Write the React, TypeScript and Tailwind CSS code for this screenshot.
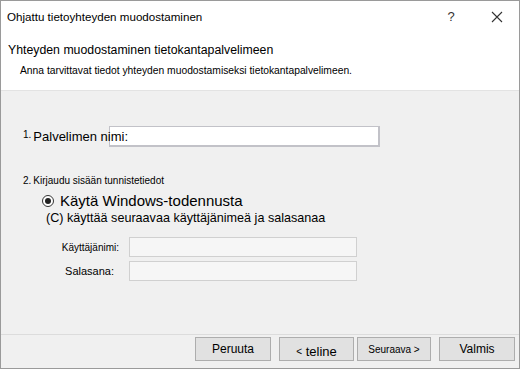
export default function App() {
  return (
    <div className="w-[520px] h-[369px] border border-[#9a9a9a] bg-[#f0f0f0] flex flex-col font-['Liberation_Sans',Arial,sans-serif] text-black overflow-hidden">
      {/* title bar + header */}
      <div className="bg-white h-[90px] border-b border-[#e3e3e3] flex flex-col">
        <div className="h-[32px] flex items-center pl-[6px] pr-[12px]">
          <span className="text-[11.6px] flex-1">Ohjattu tietoyhteyden muodostaminen</span>
          <span className="text-[13px] w-[14px] text-center mr-[33px] text-[#333]">?</span>
          <svg width="12" height="12" viewBox="0 0 12 12" className="mr-[4px]">
            <path d="M1 1 L11 11 M11 1 L1 11" stroke="#333" strokeWidth="1.1" />
          </svg>
        </div>
        <div className="pl-[7px] pt-[9px] text-[12.3px] leading-[16px]">Yhteyden muodostaminen tietokantapalvelimeen</div>
        <div className="pl-[19px] pt-[6px] text-[10.3px] leading-[13px]">
          Anna tarvittavat tiedot yhteyden muodostamiseksi tietokantapalvelimeen.
        </div>
      </div>

      {/* body */}
      <div className="flex-1 flex flex-col pl-[22px]">
        <div className="mt-[35px] flex items-center h-[21px]">
          <span className="text-[10px] self-start mt-[1px] mr-[2px]">1.</span>
          <span className="relative z-10 text-[13px] w-[76px] whitespace-nowrap">Palvelimen nimi:</span>
          <div className="w-[271px] h-[21px] bg-white border border-[#c2c2c8] border-r-2 border-b-2" />
        </div>

        <div className="mt-[26px] flex items-center">
          <span className="text-[10px] mr-[2px]">2.</span>
          <span className="text-[10px]">Kirjaudu sisään tunnistetiedot</span>
        </div>

        <div className="mt-[4px] ml-[19px] flex items-center h-[18px]">
          <span className="w-[12px] h-[12px] rounded-full border border-[#333] bg-white flex items-center justify-center mr-[6px]">
            <span className="w-[6px] h-[6px] rounded-full bg-[#222]" />
          </span>
          <span className="text-[15px] leading-[18px]">Käytä Windows-todennusta</span>
        </div>
        <div className="ml-[23px] text-[12.6px] leading-[16px]">(C) käyttää seuraavaa käyttäjänimeä ja salasanaa</div>

        <div className="mt-[11px] flex items-center">
          <span className="w-[97px] text-right text-[10px] pr-[1px]">Käyttäjänimi:</span>
          <div className="ml-[9px] w-[228px] h-[20px] bg-white/40 border border-[#d0d0d0]" />
        </div>
        <div className="mt-[4px] flex items-center">
          <span className="w-[97px] text-right text-[11px] pr-[6px]">Salasana:</span>
          <div className="ml-[9px] w-[228px] h-[20px] bg-white/40 border border-[#d0d0d0]" />
        </div>
      </div>

      {/* footer */}
      <div className="border-t border-[#dcdcdc] h-[34px] flex items-start justify-end pr-[4px] pt-[2px] gap-[3px]">
        <button className="w-[76px] h-[24px] bg-[#e1e1e1] border border-[#adadad] text-[12px] mr-[5px]">Peruuta</button>
        <button className="w-[75px] h-[24px] bg-[#e1e1e1] border border-[#adadad] text-[13px] leading-[13px] pt-[4px]">
          <span className="text-[10px] align-top">&lt;</span> teline
        </button>
        <button className="w-[74px] h-[24px] bg-[#e1e1e1] border border-[#adadad] text-[10px] mr-[5px]">Seuraava &gt;</button>
        <button className="w-[76px] h-[24px] bg-[#e1e1e1] border border-[#adadad] text-[12px]">Valmis</button>
      </div>
    </div>
  );
}
